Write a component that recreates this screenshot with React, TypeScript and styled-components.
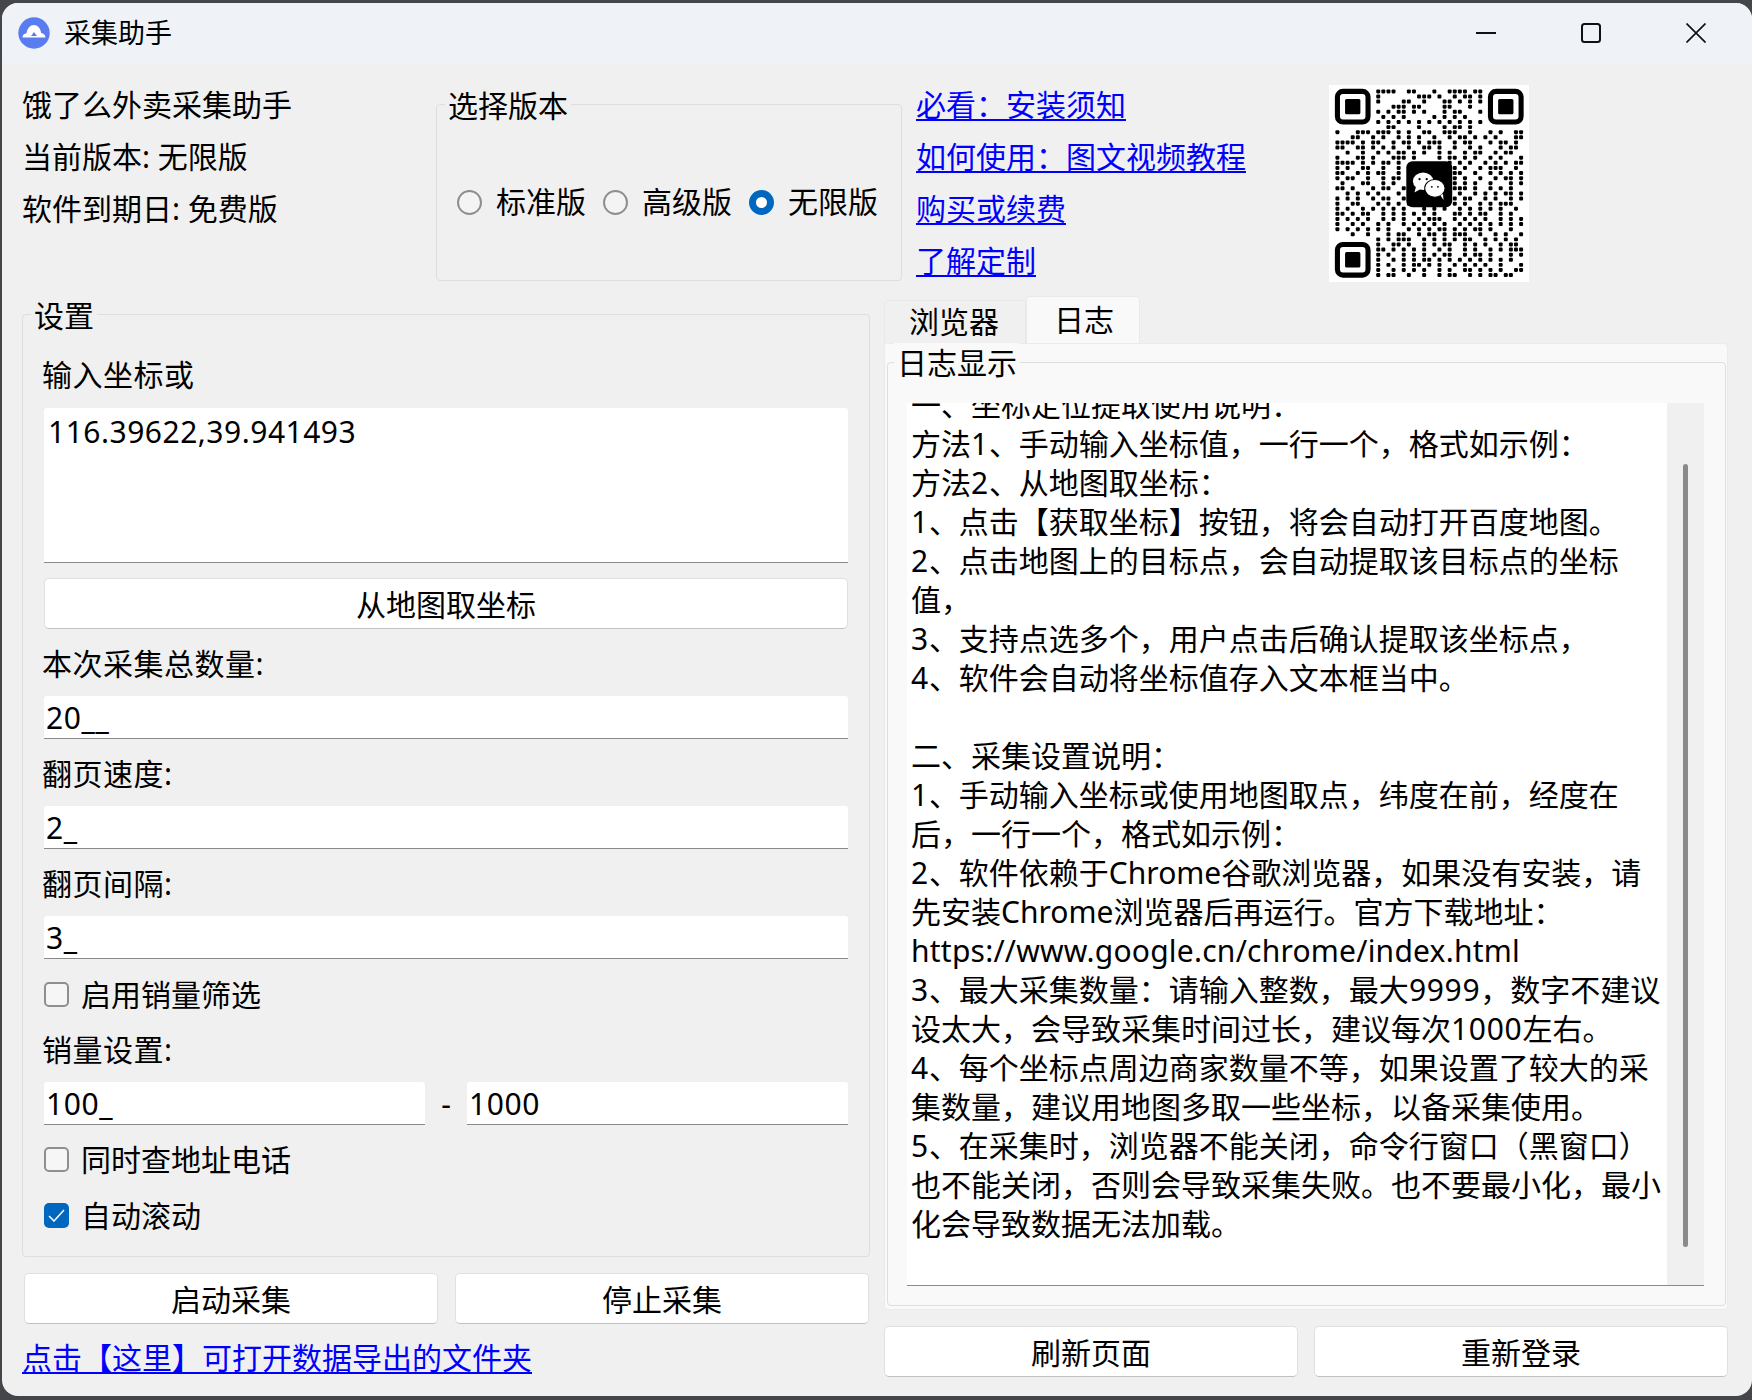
import React from "react";
import styled, { createGlobalStyle } from "styled-components";

const Global = createGlobalStyle`
  html, body { margin: 0; padding: 0; background: #44464a; }
  * { box-sizing: border-box; }
  body { font-family: "Noto Sans", "Noto Sans CJK SC", sans-serif; font-size: 30px; color: #000; }
`;

const Desktop = styled.div`
  width: 1752px;
  height: 1400px;
  padding: 3px 0 4px 2px;
  background: #44464a;
  overflow: hidden;
`;
const Win = styled.div`
  width: 1750px;
  height: 1393px;
  border-radius: 16px;
  background: #f0f0f0;
  overflow: hidden;
  display: flex;
  flex-direction: column;
`;
const TitleBar = styled.header`
  height: 60px;
  flex: none;
  background: #eff3f8;
  display: flex;
  align-items: center;
  padding: 0 4px 0 16px;
`;
const AppTitle = styled.div`
  font-size: 27px;
  margin-left: 14px;
  flex: 1;
  line-height: 36px;
`;
const WinButton = styled.div`
  width: 105px;
  height: 60px;
  display: flex;
  align-items: center;
  justify-content: center;
`;
const Body = styled.div`
  flex: 1;
  padding: 16px 22px 0 20px;
  display: flex;
  flex-direction: column;
`;
const TopRow = styled.div`
  display: flex;
  height: 208px;
`;
const InfoCol = styled.div`
  width: 414px;
  flex: none;
`;
const Line = styled.div`
  line-height: 52px;
  height: 52px;
  white-space: nowrap;
`;
const Group = styled.fieldset`
  position: relative;
  margin: 0;
  padding: 0;
  min-width: 0;
  border: 1px solid #dedede;
  border-radius: 4px;
`;
const GroupTitle = styled.div<{ $left?: number; $top?: number }>`
  position: absolute;
  top: ${(p) => p.$top ?? -19}px;
  left: ${(p) => p.$left ?? 8}px;
  padding: 0 3px;
  height: 40px;
  line-height: 40px;
  background: inherit;
  white-space: nowrap;
`;
const VersionGroup = styled(Group)`
  width: 466px;
  height: 177px;
  margin-top: 25px;
  flex: none;
  display: flex;
  align-items: center;
  background: #f0f0f0;
  padding: 19px 0 0 20px;
`;
const RadioItem = styled.label`
  display: flex;
  align-items: center;
  flex: none;
  margin-right: 17px;
  line-height: 40px;
  white-space: nowrap;
`;
const RadioDot = styled.span<{ $on?: boolean }>`
  width: 25px;
  height: 25px;
  border-radius: 50%;
  flex: none;
  margin-right: 14px;
  background: ${(p) => (p.$on ? "#fff" : "#f4f4f4")};
  border: ${(p) => (p.$on ? "7px solid #0067c0" : "2px solid #8f8f8f")};
`;
const LinkCol = styled.div`
  margin-left: 14px;
  width: 413px;
  flex: none;
`;
const Link = styled.a`
  color: #0000ff;
  text-decoration: underline;
  text-decoration-thickness: 2px;
  text-underline-offset: 3px;
  cursor: pointer;
`;
const QrBox = styled.div`
  width: 200px;
  height: 197px;
  margin-top: 6px;
  background: #fff;
  flex: none;
`;
const QrSvg = styled.svg`
  display: block;
`;
const Main = styled.div`
  display: flex;
  gap: 14px;
  flex: 1;
`;
const LeftCol = styled.div`
  width: 848px;
  flex: none;
  padding-top: 27px;
`;
const SettingsGroup = styled(Group)`
  background: #f0f0f0;
  padding: 40px 21px 28px;
  display: flex;
  flex-direction: column;
`;
const FieldLabel = styled.div<{ $top?: number; $bottom?: number }>`
  height: 40px;
  line-height: 40px;
  margin-left: -2px;
  letter-spacing: 0.5px;
  margin-top: ${(p) => p.$top ?? 15}px;
  margin-bottom: ${(p) => p.$bottom ?? 12}px;
`;
const Area = styled.textarea`
  display: block;
  width: 100%;
  height: 155px;
  border: 0;
  border-bottom: 1.5px solid #8a8a8a;
  border-radius: 3px 3px 0 0;
  background: #fff;
  resize: none;
  outline: none;
  padding: 4px;
  font: inherit;
  letter-spacing: 0.5px;
  line-height: 40px;
  color: #000;
  overflow: hidden;
`;
const Btn = styled.button<{ $h?: number }>`
  display: block;
  width: 100%;
  height: ${(p) => p.$h ?? 51}px;
  background: #fff;
  border: 1px solid #e0e0e0;
  border-bottom-color: #c0c0c0;
  border-radius: 5px;
  font: inherit;
  line-height: 40px;
  color: #000;
  padding: 2px 0 0;
`;
const MapBtn = styled(Btn)`
  margin-top: 15px;
`;
const TextInput = styled.input`
  display: block;
  width: 100%;
  height: 43px;
  border: 0;
  border-bottom: 1.5px solid #8a8a8a;
  border-radius: 3px 3px 0 0;
  background: #fff;
  outline: none;
  padding: 1px 2px 0;
  font: inherit;
  letter-spacing: 0.6px;
  color: #000;
`;
const CheckRow = styled.label<{ $top: number }>`
  display: flex;
  align-items: center;
  height: 25px;
  margin-top: ${(p) => p.$top}px;
  line-height: 40px;
`;
const CheckBox = styled.span<{ $on?: boolean }>`
  width: 25px;
  height: 25px;
  flex: none;
  border-radius: 5px;
  margin-right: 12px;
  display: flex;
  align-items: center;
  justify-content: center;
  background: ${(p) => (p.$on ? "#0067c0" : "#f6f6f6")};
  border: ${(p) => (p.$on ? "0" : "2px solid #8f8f8f")};
`;
const RangeRow = styled.div`
  display: grid;
  grid-template-columns: 381px 42px 381px;
  align-items: center;
`;
const Dash = styled.div`
  text-align: center;
`;
const ButtonRow = styled.div<{ $top: number; $gap: number; $pad?: string }>`
  display: flex;
  gap: ${(p) => p.$gap}px;
  margin-top: ${(p) => p.$top}px;
  padding: ${(p) => p.$pad ?? "0"};
`;
const FooterLink = styled.div`
  height: 40px;
  line-height: 40px;
  margin-top: 14px;
`;
const RightCol = styled.div`
  width: 844px;
  flex: none;
  padding-top: 9px;
`;
const TabBar = styled.div`
  display: flex;
  align-items: flex-end;
  height: 47px;
`;
const Tab = styled.div<{ $on?: boolean }>`
  height: ${(p) => (p.$on ? 47 : 43)}px;
  padding: ${(p) => (p.$on ? "0 25px 0 27px" : "0 26px 0 24px")};
  background: ${(p) => (p.$on ? "#f9f9f9" : "#f0f0f0")};
  border: 1px solid #e9e9e9;
  border-bottom: 0;
  border-radius: 4px 4px 0 0;
  line-height: ${(p) => (p.$on ? 45 : 42)}px;
`;
const Pane = styled.div`
  height: 967px;
  background: #f9f9f9;
  border: 1px solid #ebebeb;
  border-radius: 0 4px 4px 4px;
  padding: 18px 1px 4px 2px;
`;
const LogGroup = styled(Group)`
  height: 944px;
  background: #f9f9f9;
  padding: 40px 21px 19px 19px;
  display: flex;
`;
const LogBox = styled.div`
  flex: 1;
  min-width: 0;
  display: flex;
  border-bottom: 1.5px solid #8a8a8a;
  height: 100%;
`;
const LogText = styled.div`
  flex: 1;
  background: #fff;
  overflow: hidden;
  padding-left: 4px;
`;
const LogLines = styled.div`
  margin-top: -18px;
`;
const LogLine = styled.div<{ $url?: boolean }>`
  line-height: 39px;
  height: 39px;
  white-space: nowrap;
  letter-spacing: ${(p) => (p.$url ? 0.23 : 0)}px;
`;
const Digits = styled.span`
  letter-spacing: 0.7px;
`;
const ScrollTrack = styled.div`
  width: 37px;
  flex: none;
  background: #f0f0f0;
  padding: 61px 0 0 16px;
`;
const ScrollThumb = styled.div`
  width: 5px;
  height: 783px;
  border-radius: 3px;
  background: #8a8a8a;
`;

/* the QR drawing: each string is one row of 37 modules */
const QR_ROWS = [
  "........####..##...#..####.##........",
  "........#.......###.#..#.##.#........",
  "........#....##..#...##.#.#.#........",
  "...........###.##....##...#..........",
  "........#.#.##.#.#...#.##...#........",
  ".........#.#.#.....#.#.#.#...........",
  "........#.#.#.#.#.#.#.#.#.#.#........",
  "..........##....#....#.##.#..........",
  "#...###.###.#.#..##..###..#...#.#..##",
  "...##..#.#..#.#.#..#..#.##.#.#.#...##",
  "####.#.##..#.##.#.###..#.##...#.##.#.",
  "##..##.#.#.#..#..##.#..#..#.#...#.##.",
  "..#..#..#.#.##.#.#..#.#..#.##..#.##..",
  "#...##.#...###.#....#.##.#.#..#.#...#",
  "####.#.#.##.#.........#.#.#..#.#.#.##",
  "#.#..##..#..#..........#.#..#.###..#.",
  "##..#.#.##..#..........##..#..#.#.#.#",
  "#.##..#..#.##..........#.#..#..#.##.#",
  ".#...##..#.#...........#.#.#..#...#.#",
  "##.#...#.##..#.........###.#..#.#.#..",
  "..#.#.#.#...#.........#.#..#.#.#.##.#",
  "#.#.#..#.##..#.#.#..#..#.##..#.#..#.#",
  "#..##...#.#.#.##.##..#.#.#..#.#.###..",
  "#.#..#.#.#.#.#...#.#.#..#.#.#.#.#..#.",
  "##.#.##..#.#.#.#.#.#...##.#.##..#.#..",
  "#.#.#.#..#.#.#..#.###..#.#.#.#..#.#.#",
  "#..#.#..#.#..#.#.#.#.#..#.#.#.#.#.#.#",
  "#.#.#.#.#.#...#.#.#.##.#.#.##.#...#..",
  "...#..#...#.##..#.##.#.###..#..#.#..#",
  "........#.#.###..#.#.#.#.##..#.#.#.#.",
  "........#..##.#..#.#.##..#.#.#..#.##.",
  "........##.#.#.#.#..#.#..#.#..#.#.###",
  "........#.#..#.#.#.#.##..#.##.#...#.#",
  "........#..#.#.#.##.#.#.#.#.#.#.#.#..",
  "........#.#..#.##.#.#..#.#.#.#..#...#",
  "........#..#.#.#.#..#.#..##.#.#.#..##",
  "........#.##..#..#..#.##..#.#.##.##..",
];

const Finder: React.FC<{ x: number; y: number }> = ({ x, y }) => (
  <g>
    <rect x={x + 0.5} y={y + 0.5} width={6} height={6} rx={1.1} fill="none" stroke="#000" strokeWidth={1} />
    <rect x={x + 2} y={y + 2} width={3} height={3} rx={0.3} fill="#000" />
  </g>
);

const QrCode = () => (
  <QrSvg width="200" height="197" viewBox="0 0 39.2 38.6">
    <g transform="translate(1.15 0.75)">
      {QR_ROWS.map((row, r) =>
        row.split("").map((c, i) =>
          c === "#" ? <rect key={`${r}-${i}`} x={i + 0.11} y={r + 0.11} width={0.78} height={0.78} rx={0.22} fill="#000" /> : null
        )
      )}
      <Finder x={0} y={0} />
      <Finder x={30} y={0} />
      <Finder x={0} y={30} />
      <rect x={14} y={14.2} width={9} height={9} rx={1.2} fill="#000" />
      <ellipse cx={17.3} cy={18.1} rx={2} ry={1.7} fill="#fff" />
      <path d="M15.900 19.200l-.3 1.100 1.300-.7z" fill="#fff" />
      <ellipse cx={19.600} cy={19.500} rx={2} ry={1.75} fill="#fff" stroke="#000" strokeWidth={0.2} />
      <path d="M20.700 20.900l.6.9-.1-1.200z" fill="#fff" />
      <circle cx={16.600} cy={17.700} r={0.22} fill="#000" />
      <circle cx={18} cy={17.700} r={0.22} fill="#000" />
      <circle cx={19} cy={19.200} r={0.18} fill="#000" />
      <circle cx={20.200} cy={19.200} r={0.18} fill="#000" />
    </g>
  </QrSvg>
);

const LOG = [
  "一、坐标定位提取使用说明：",
  "方法1、手动输入坐标值，一行一个，格式如示例：",
  "方法2、从地图取坐标：",
  "1、点击【获取坐标】按钮，将会自动打开百度地图。",
  "2、点击地图上的目标点，会自动提取该目标点的坐标",
  "值，",
  "3、支持点选多个，用户点击后确认提取该坐标点，",
  "4、软件会自动将坐标值存入文本框当中。",
  "\u00a0",
  "二、采集设置说明：",
  "1、手动输入坐标或使用地图取点，纬度在前，经度在",
  "后，一行一个，格式如示例：",
  "2、软件依赖于Chrome谷歌浏览器，如果没有安装，请",
  "先安装Chrome浏览器后再运行。官方下载地址：",
  "https://www.google.cn/chrome/index.html",
  "3、最大采集数量：请输入整数，最大9999，数字不建议",
  "设太大，会导致采集时间过长，建议每次1000左右。",
  "4、每个坐标点周边商家数量不等，如果设置了较大的采",
  "集数量，建议用地图多取一些坐标，以备采集使用。",
  "5、在采集时，浏览器不能关闭，命令行窗口（黑窗口）",
  "也不能关闭，否则会导致采集失败。也不要最小化，最小",
  "化会导致数据无法加载。",
];

const withDigits = (line: string) =>
  line.split(/(\d+)/).map((part, i) => (/^\d+$/.test(part) ? <Digits key={i}>{part}</Digits> : part));

export default function App() {
  return (
    <>
      <Global />
      <Desktop>
        <Win>
          <TitleBar>
            <svg width="32" height="32" viewBox="0 0 32 32">
              <circle cx="16" cy="16" r="15.7" fill="#5b7cf0" />
              <path d="M4.500 20.500c0-2.600 1.800-4 4-4.300C9.300 11.200 12.300 8 16 8c3.600 0 6.400 3 7.200 8 2.400.2 4.300 2 4.300 4.500z" fill="#fff" />
              <path d="M13 19l3-4 3 4z" fill="#5b7cf0" />
            </svg>
            <AppTitle>采集助手</AppTitle>
            <WinButton>
              <svg width="20" height="20" viewBox="0 0 20 20"><path d="M0 10h20" stroke="#111" strokeWidth="2" /></svg>
            </WinButton>
            <WinButton>
              <svg width="20" height="20" viewBox="0 0 20 20"><rect x="1" y="1" width="18" height="18" rx="2.500" fill="none" stroke="#111" strokeWidth="2" /></svg>
            </WinButton>
            <WinButton>
              <svg width="20" height="20" viewBox="0 0 20 20"><path d="M.5.500l19 19M19.500.500l-19 19" stroke="#111" strokeWidth="1.700" /></svg>
            </WinButton>
          </TitleBar>
          <Body>
            <TopRow>
              <InfoCol>
                <Line>饿了么外卖采集助手</Line>
                <Line>当前版本: 无限版</Line>
                <Line>软件到期日: 免费版</Line>
              </InfoCol>
              <VersionGroup>
                <GroupTitle>选择版本</GroupTitle>
                <RadioItem><RadioDot />标准版</RadioItem>
                <RadioItem><RadioDot />高级版</RadioItem>
                <RadioItem><RadioDot $on />无限版</RadioItem>
              </VersionGroup>
              <LinkCol>
                <Line><Link>必看：安装须知</Link></Line>
                <Line><Link>如何使用：图文视频教程</Link></Line>
                <Line><Link>购买或续费</Link></Line>
                <Line><Link>了解定制</Link></Line>
              </LinkCol>
              <QrBox><QrCode /></QrBox>
            </TopRow>
            <Main>
              <LeftCol>
                <SettingsGroup>
                  <GroupTitle>设置</GroupTitle>
                  <FieldLabel $top={0} $bottom={13}>输入坐标或</FieldLabel>
                  <Area readOnly defaultValue="116.39622,39.941493" />
                  <MapBtn>从地图取坐标</MapBtn>
                  <FieldLabel>本次采集总数量:</FieldLabel>
                  <TextInput readOnly defaultValue="20__" />
                  <FieldLabel>翻页速度:</FieldLabel>
                  <TextInput readOnly defaultValue="2_" />
                  <FieldLabel>翻页间隔:</FieldLabel>
                  <TextInput readOnly defaultValue="3_" />
                  <CheckRow $top={23}><CheckBox />启用销量筛选</CheckRow>
                  <FieldLabel $top={23}>销量设置:</FieldLabel>
                  <RangeRow>
                    <TextInput readOnly defaultValue="100_" />
                    <Dash>-</Dash>
                    <TextInput readOnly defaultValue="1000" />
                  </RangeRow>
                  <CheckRow $top={22}><CheckBox />同时查地址电话</CheckRow>
                  <CheckRow $top={31}>
                    <CheckBox $on>
                      <svg width="17" height="13" viewBox="0 0 17 13"><path d="M1 7l5 5L16 1" fill="none" stroke="#fff" strokeWidth="1.500" /></svg>
                    </CheckBox>
                    自动滚动
                  </CheckRow>
                </SettingsGroup>
                <ButtonRow $top={16} $gap={17} $pad="0 1px 0 2px">
                  <Btn>启动采集</Btn>
                  <Btn>停止采集</Btn>
                </ButtonRow>
                <FooterLink><Link>点击【这里】可打开数据导出的文件夹</Link></FooterLink>
              </LeftCol>
              <RightCol>
                <TabBar>
                  <Tab>浏览器</Tab>
                  <Tab $on>日志</Tab>
                </TabBar>
                <Pane>
                  <LogGroup>
                    <GroupTitle $left={6} $top={-20}>日志显示</GroupTitle>
                    <LogBox>
                      <LogText>
                        <LogLines>
                          {LOG.map((l, i) => (
                            <LogLine key={i} $url={l.startsWith("http")}>
                              {l.startsWith("http") ? l : withDigits(l)}
                            </LogLine>
                          ))}
                        </LogLines>
                      </LogText>
                      <ScrollTrack><ScrollThumb /></ScrollTrack>
                    </LogBox>
                  </LogGroup>
                </Pane>
                <ButtonRow $top={16} $gap={16}>
                  <Btn>刷新页面</Btn>
                  <Btn>重新登录</Btn>
                </ButtonRow>
              </RightCol>
            </Main>
          </Body>
        </Win>
      </Desktop>
    </>
  );
}
